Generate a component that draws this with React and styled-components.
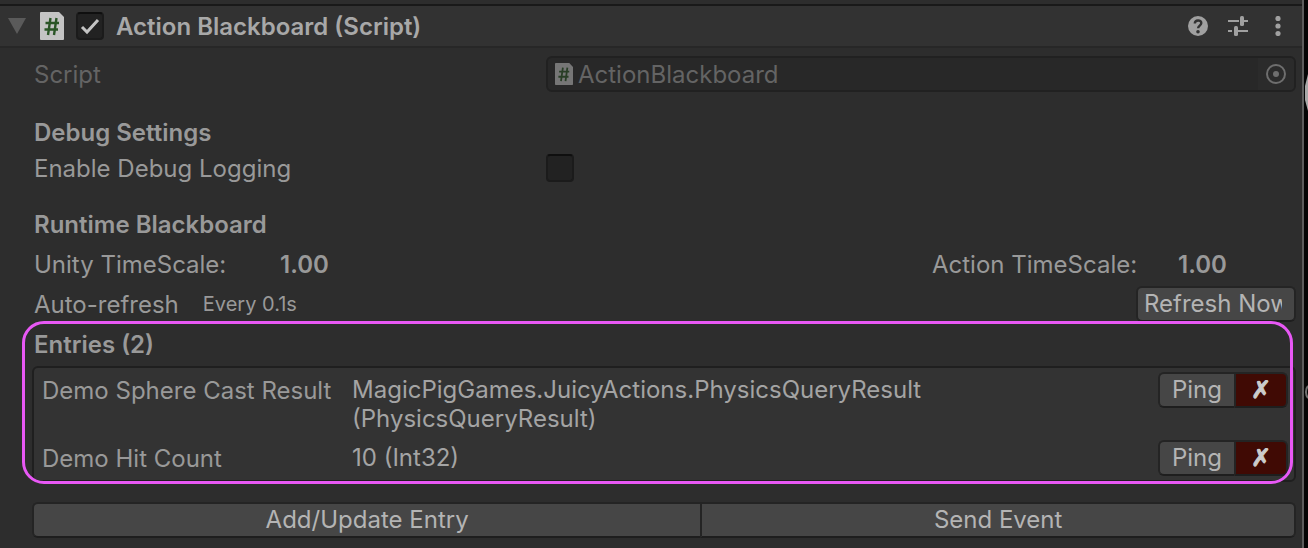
import React, { useState } from "react"
import styled, { createGlobalStyle, ThemeProvider } from "styled-components"

const theme = {
  black: "#191919",
  panel: "#2d2d2d",
  header: "#323232",
  field: "#282828",
  line: "#212121",
  button: "#464646",
  danger: "#400a04",
  text: "#999999",
  bright: "#b4b4b4",
  dim: "#646464",
  highlight: "#e858f5",
}

const GlobalStyle = createGlobalStyle`
  * {
    box-sizing: border-box;
  }
  body {
    margin: 0;
    background: #050505;
    font-family: Inter, "Liberation Sans", sans-serif;
    font-size: 24px;
    line-height: 28px;
  }
  button,
  input {
    margin: 0;
    padding: 0;
    font: inherit;
  }
`

const Window = styled.div`
  display: flex;
  min-height: 100vh;
`

const Inspector = styled.main`
  flex: 1;
  min-width: 0;
  padding-top: 4px;
  color: ${(props) => props.theme.text};
  background: ${(props) => props.theme.panel};
  border-right: 2px solid #5c5c5c;
`

const Behind = styled.aside`
  flex: none;
  width: 4px;
  padding-top: 74px;
  overflow: hidden;
`

const Header = styled.header`
  display: flex;
  align-items: center;
  height: 44px;
  padding: 0 12px 0 8px;
  background: ${(props) => props.theme.header};
  border-top: 2px solid ${(props) => props.theme.black};
  border-bottom: 2px solid #272727;
`

const Title = styled.label`
  flex: 1;
  margin-left: 12px;
  padding-top: 2px;
  font-weight: 600;
  color: #a8a8a8;
`

const Foldout = styled.button`
  display: flex;
  width: 18px;
  margin-right: 14px;
  border: 0;
  background: none;
`

const ScriptIcon = styled.svg`
  flex: none;
  width: ${(props) => props.$width}px;
  height: ${(props) => props.$height}px;
  opacity: ${(props) => (props.$faded ? 0.5 : 1)};
`

const Checkbox = styled.input`
  appearance: none;
  flex: none;
  width: 28px;
  height: 28px;
  border: 2px solid #1b1b1b;
  border-top-color: #0f0f0f;
  border-radius: 4px;
  background: #222222;
  &:checked {
    background: #222222
      url("data:image/svg+xml,%3Csvg xmlns='http://www.w3.org/2000/svg' viewBox='0 0 24 24'%3E%3Cpath d='M4 13l5 5L20 6' fill='none' stroke='%23c4c4c4' stroke-width='3'/%3E%3C/svg%3E")
      center / 24px no-repeat;
  }
`

const HeaderCheckbox = styled(Checkbox)`
  margin-left: 12px;
`

const IconButton = styled.button`
  display: flex;
  justify-content: center;
  width: 24px;
  margin-left: 16px;
  color: #a0a0a0;
  border: 0;
  background: none;
`

const Content = styled.div`
  padding: 8px 6px 0 32px;
`

const Row = styled.div`
  display: flex;
  align-items: center;
  height: 36px;
  margin-top: ${(props) => props.$gap || 0}px;
  padding-left: 2px;
`

const Label = styled.label`
  flex: none;
  width: 512px;
  padding-top: 2px;
  color: ${(props) => (props.$disabled ? props.theme.dim : "inherit")};
`

const Heading = styled.h2`
  margin: ${(props) => props.$gap || 0}px 0 0;
  padding: 2px 0 0 2px;
  font-size: 24px;
  font-weight: 600;
  line-height: 34px;
`

const ObjectField = styled.div`
  display: flex;
  flex: 1;
  align-items: center;
  height: 36px;
  padding-left: 7px;
  border: 2px solid ${(props) => props.theme.line};
  border-radius: 6px;
  background: ${(props) => props.theme.field};
`

const ObjectName = styled.input`
  flex: 1;
  min-width: 0;
  margin-left: 5px;
  padding-top: 2px;
  border: 0;
  color: ${(props) => props.theme.dim};
  background: none;
`

const Picker = styled.button`
  display: flex;
  align-items: center;
  justify-content: center;
  width: 36px;
  height: 32px;
  color: #6e6e6e;
  border: 0;
  border-radius: 0 4px 4px 0;
  background: #2b2b2b;
`

const Stat = styled.span`
  width: ${(props) => (props.$auto ? "auto" : "246px")};
  padding-top: 2px;
`

const Strong = styled.strong`
  flex: ${(props) => (props.$grow ? 1 : "none")};
  width: 118px;
  padding-top: 2px;
  font-weight: 600;
`

const Small = styled.small`
  flex: 1;
  margin-left: 24px;
  font-size: 20px;
`

const Button = styled.button`
  flex: ${(props) => (props.$width ? "none" : "1 1 auto")};
  width: ${(props) => (props.$width ? `${props.$width}px` : "auto")};
  height: 36px;
  overflow: hidden;
  white-space: nowrap;
  color: ${(props) => props.theme.bright};
  border: 2px solid #242424;
  border-bottom-color: #1e1e1e;
  border-radius: 6px;
  background: ${(props) => props.theme.button};
`

const RefreshButton = styled(Button)`
  padding: 0 12px 0 6px;
`

const ClippedText = styled.span`
  display: block;
  overflow: hidden;
`

const ButtonGroup = styled.div`
  display: flex;
  flex: none;
  & > :first-child {
    border-right: 0;
    border-radius: 6px 0 0 6px;
  }
  & > :last-child {
    border-radius: 0 6px 6px 0;
  }
`

const RemoveButton = styled(Button)`
  font-family: "DejaVu Sans", sans-serif;
  font-weight: 700;
  color: #cccccc;
  background: ${(props) => props.theme.danger};
  -webkit-text-stroke: 1px #cccccc;
`

const Entries = styled.section`
  position: relative;
`

const Highlight = styled.div`
  position: absolute;
  inset: -5px 3px -2px -10px;
  border: 3px solid ${(props) => props.theme.highlight};
  border-radius: 22px;
  pointer-events: none;
`

const EntryList = styled.ul`
  display: flex;
  flex-direction: column;
  gap: 4px;
  margin: 4px 0 0;
  padding: 4px 6px 4px 8px;
  list-style: none;
  border: 2px solid #1f1f1f;
  border-radius: 6px;
  background: #333333;
`

const Entry = styled.li`
  display: flex;
  align-items: flex-start;
  min-height: 36px;
`

const EntryName = styled.span`
  flex: none;
  width: 310px;
  padding-top: 5px;
`

const EntryValue = styled.span`
  flex: 1;
  min-width: 0;
  padding: 3px 200px 3px 0;
  line-height: 29px;
  color: #a4a4a4;
`

const Actions = styled(ButtonGroup)`
  margin-top: 20px;
`

const entries = [
  {
    name: "Demo Sphere Cast Result",
    value: "MagicPigGames.JuicyActions.PhysicsQueryResult (PhysicsQueryResult)",
  },
  { name: "Demo Hit Count", value: "10 (Int32)" },
]

const CSharpIcon = ({ width, height, faded }) => (
  <ScriptIcon
    viewBox="0 0 24 28"
    preserveAspectRatio="none"
    $width={width}
    $height={height}
    $faded={faded}
    aria-hidden="true"
  >
    <path d="M1 0h18l5 5v22a1 1 0 0 1-1 1H1a1 1 0 0 1-1-1V1a1 1 0 0 1 1-1z" fill="#c4c4c4" />
    <path
      d="M10.500 6L8 23M16.500 6L14 23M5.500 11h13.500M4.500 17.500h13.500"
      fill="none"
      stroke="#2a5526"
      strokeWidth="2.400"
    />
  </ScriptIcon>
)

const App = () => {
  const [enabled, setEnabled] = useState(true)
  const [logging, setLogging] = useState(false)

  return (
    <ThemeProvider theme={theme}>
      <GlobalStyle />
      <Window>
        <Inspector>
          <Header>
            <Foldout aria-label="Collapse">
              <svg width="18" height="16" viewBox="0 0 18 16">
                <path d="M0 0h18L9 16z" fill="#5a5a5a" />
              </svg>
            </Foldout>
            <CSharpIcon width={24} height={28} />
            <HeaderCheckbox
              id="enabled"
              type="checkbox"
              checked={enabled}
              onChange={(e) => setEnabled(e.target.checked)}
            />
            <Title htmlFor="enabled">Action Blackboard (Script)</Title>
            <IconButton aria-label="Help">
              <svg width="20" height="20" viewBox="0 0 20 20">
                <circle cx="10" cy="10" r="10" fill="currentColor" />
                <path
                  d="M6.800 7.500c0-4 6.500-4 6.500-.4 0 2.400-3.200 2.600-3.200 5.100"
                  fill="none"
                  stroke="#323232"
                  strokeWidth="2.400"
                />
                <circle cx="10" cy="15.700" r="1.800" fill="#323232" />
              </svg>
            </IconButton>
            <IconButton aria-label="Presets">
              <svg width="20" height="20" viewBox="0 0 20 20" fill="currentColor">
                <path d="M0 4h11v2H0zM16 4h4v2h-4zM0 14h4v2H0zM10 14h10v2H10z" />
                <rect x="12" y="0" width="4" height="10" rx="1.500" />
                <rect x="6" y="10" width="4" height="10" rx="1.500" />
              </svg>
            </IconButton>
            <IconButton aria-label="More">
              <svg width="6" height="20" viewBox="0 0 6 20" fill="currentColor">
                <circle cx="3" cy="2.500" r="2.600" />
                <circle cx="3" cy="10" r="2.600" />
                <circle cx="3" cy="17.500" r="2.600" />
              </svg>
            </IconButton>
          </Header>
          <Content>
            <Row>
              <Label htmlFor="script" $disabled>
                Script
              </Label>
              <ObjectField>
                <CSharpIcon width={18} height={22} faded />
                <ObjectName id="script" value="ActionBlackboard" disabled readOnly />
                <Picker aria-label="Select script" disabled>
                  <svg width="20" height="20" viewBox="0 0 20 20">
                    <circle cx="10" cy="10" r="9" fill="none" stroke="currentColor" strokeWidth="2" />
                    <circle cx="10" cy="10" r="3" fill="currentColor" />
                  </svg>
                </Picker>
              </ObjectField>
            </Row>
            <Heading $gap={22}>Debug Settings</Heading>
            <Row>
              <Label htmlFor="logging">Enable Debug Logging</Label>
              <Checkbox
                id="logging"
                type="checkbox"
                checked={logging}
                onChange={(e) => setLogging(e.target.checked)}
              />
            </Row>
            <Heading $gap={20}>Runtime Blackboard</Heading>
            <Row $gap={4}>
              <Stat>Unity TimeScale:</Stat>
              <Strong $grow>1.00</Strong>
              <Stat>Action TimeScale:</Stat>
              <Strong>1.00</Strong>
            </Row>
            <Row $gap={4}>
              <Stat $auto>Auto-refresh</Stat>
              <Small>Every 0.1s</Small>
              <RefreshButton $width={160}>
                <ClippedText>Refresh Now</ClippedText>
              </RefreshButton>
            </Row>
            <Entries>
              <Heading $gap={4}>Entries (2)</Heading>
              <EntryList>
                {entries.map(({ name, value }) => (
                  <Entry key={name}>
                    <EntryName>{name}</EntryName>
                    <EntryValue>{value}</EntryValue>
                    <ButtonGroup>
                      <Button $width={76}>Ping</Button>
                      <RemoveButton $width={54} aria-label={`Remove ${name}`}>
                        ✗
                      </RemoveButton>
                    </ButtonGroup>
                  </Entry>
                ))}
              </EntryList>
              <Highlight />
            </Entries>
            <Actions>
              <Button>Add/Update Entry</Button>
              <Button>Send Event</Button>
            </Actions>
          </Content>
        </Inspector>
        <Behind>
          {/* edge of the window that sits behind the inspector */}
          <svg width="4" height="340" viewBox="0 0 4 340" aria-hidden="true">
            <path d="M4 0L1 12v14l3 11z" fill="#a8a8a8" />
            <path d="M4 312a6 8 0 0 0 0 12" fill="none" stroke="#707070" strokeWidth="2" />
          </svg>
        </Behind>
      </Window>
    </ThemeProvider>
  )
}

export default App
